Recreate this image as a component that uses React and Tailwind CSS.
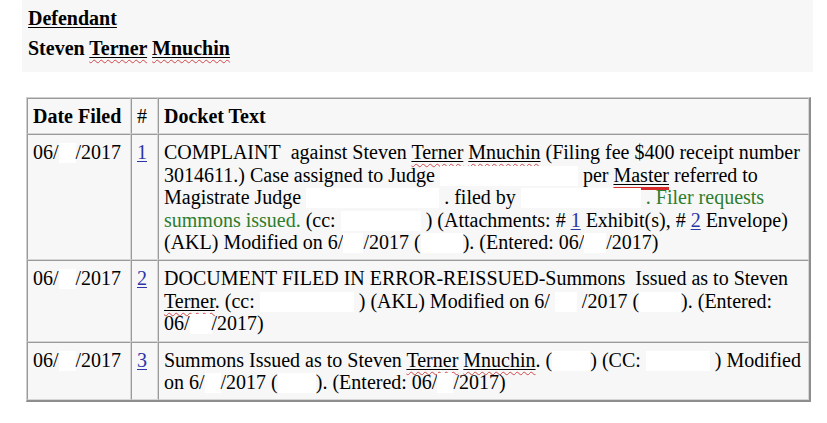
import React from "react";

function Box({ w }) {
  return <span className="inline-block bg-white align-[-4px] h-[20px]" style={{ width: w }} />;
}

function Spell({ children }) {
  return (
    <span className="underline decoration-black decoration-1 underline-offset-[2px]">
      <span className="underline decoration-wavy decoration-[#d04848] decoration-1 underline-offset-[4px]">{children}</span>
    </span>
  );
}

function Lnk({ children }) {
  return <span className="text-[#2a35a8] underline decoration-1 underline-offset-[2px]">{children}</span>;
}

function DateCell() {
  return (
    <span className="whitespace-nowrap">
      06/<Box w={17} />/2017
    </span>
  );
}

const td = "align-top border-t border-l border-t-[#9a9a9a] border-l-[#9a9a9a] border-b border-r border-b-[#d6d6d6] border-r-[#d6d6d6] pl-[5px] pr-[5px] py-[6px]";

export default function App() {
  return (
    <div className="bg-white min-h-[423px] w-[827px] text-black text-[20px] leading-[22.4px] font-['Liberation_Serif','Times_New_Roman',serif]">
      <div className="ml-[22px] w-[791px] h-[72px] bg-[#f7f7f7] pl-[6px] pt-[6px]">
        <div className="font-bold leading-[24px]">
          <span className="underline decoration-1 underline-offset-[2px]">Defendant</span>
        </div>
        <div className="font-bold leading-[24px] mt-[6px]">
          Steven <Spell>Terner</Spell> <Spell>Mnuchin</Spell>
        </div>
      </div>

      <table className="ml-[26px] mt-[25px] w-[785px] table-fixed border-separate border-spacing-0 bg-[#f7f7f7] border-t border-l border-t-[#d0d0d0] border-l-[#d0d0d0] border-r-[2px] border-b-[2px] border-r-[#8e8e8e] border-b-[#8e8e8e]">
        <colgroup>
          <col className="w-[104px]" />
          <col className="w-[27px]" />
          <col />
        </colgroup>
        <thead>
          <tr>
            <th className={td + " text-left whitespace-nowrap"}>Date Filed</th>
            <th className={td + " text-left font-normal"}>#</th>
            <th className={td + " text-left"}>Docket Text</th>
          </tr>
        </thead>
        <tbody>
          <tr>
            <td className={td}><DateCell /></td>
            <td className={td}><Lnk>1</Lnk></td>
            <td className={td + " whitespace-nowrap"}>
              <div>COMPLAINT&nbsp; against Steven <Spell>Terner</Spell> <Spell>Mnuchin</Spell> (Filing fee $400 receipt number</div>
              <div>
                3014611.) Case assigned to Judge <Box w={138} /> per{" "}
                <span className="underline decoration-black decoration-1 underline-offset-[2px]">
                  <span className="underline decoration-[#d42a2a] decoration-[3px] underline-offset-[5px]">Master</span>
                </span>{" "}
                referred to
              </div>
              <div>
                Magistrate Judge <Box w={133} /> . filed by <Box w={120} /> <span className="text-[#2e7d2e]">. Filer requests</span>
              </div>
              <div>
                <span className="text-[#2e7d2e]">summons issued.</span> (cc: <Box w={80} /> ) (Attachments: # <Lnk>1</Lnk> Exhibit(s), # <Lnk>2</Lnk> Envelope)
              </div>
              <div>
                (AKL) Modified on 6/<Box w={20} />/2017 (<Box w={42} />). (Entered: 06/<Box w={22} />/2017)
              </div>
            </td>
          </tr>
          <tr>
            <td className={td}><DateCell /></td>
            <td className={td}><Lnk>2</Lnk></td>
            <td className={td + " whitespace-nowrap"}>
              <div>DOCUMENT FILED IN ERROR-REISSUED-Summons&nbsp; Issued as to Steven</div>
              <div>
                <Spell>Terner</Spell>. (cc: <Box w={94} /> ) (AKL) Modified on 6/ <Box w={22} /> /2017 (<Box w={42} />). (Entered:
              </div>
              <div>
                06/<Box w={22} />/2017)
              </div>
            </td>
          </tr>
          <tr>
            <td className={td}><DateCell /></td>
            <td className={td}><Lnk>3</Lnk></td>
            <td className={td + " whitespace-nowrap"}>
              <div>
                Summons Issued as to Steven <Spell>Terner</Spell> <Spell>Mnuchin</Spell>. (<Box w={38} />) (CC: <Box w={64} /> ) Modified
              </div>
              <div>
                on 6/<Box w={16} />/2017 (<Box w={38} />). (Entered: 06/<Box w={16} />/2017)
              </div>
            </td>
          </tr>
        </tbody>
      </table>
    </div>
  );
}
